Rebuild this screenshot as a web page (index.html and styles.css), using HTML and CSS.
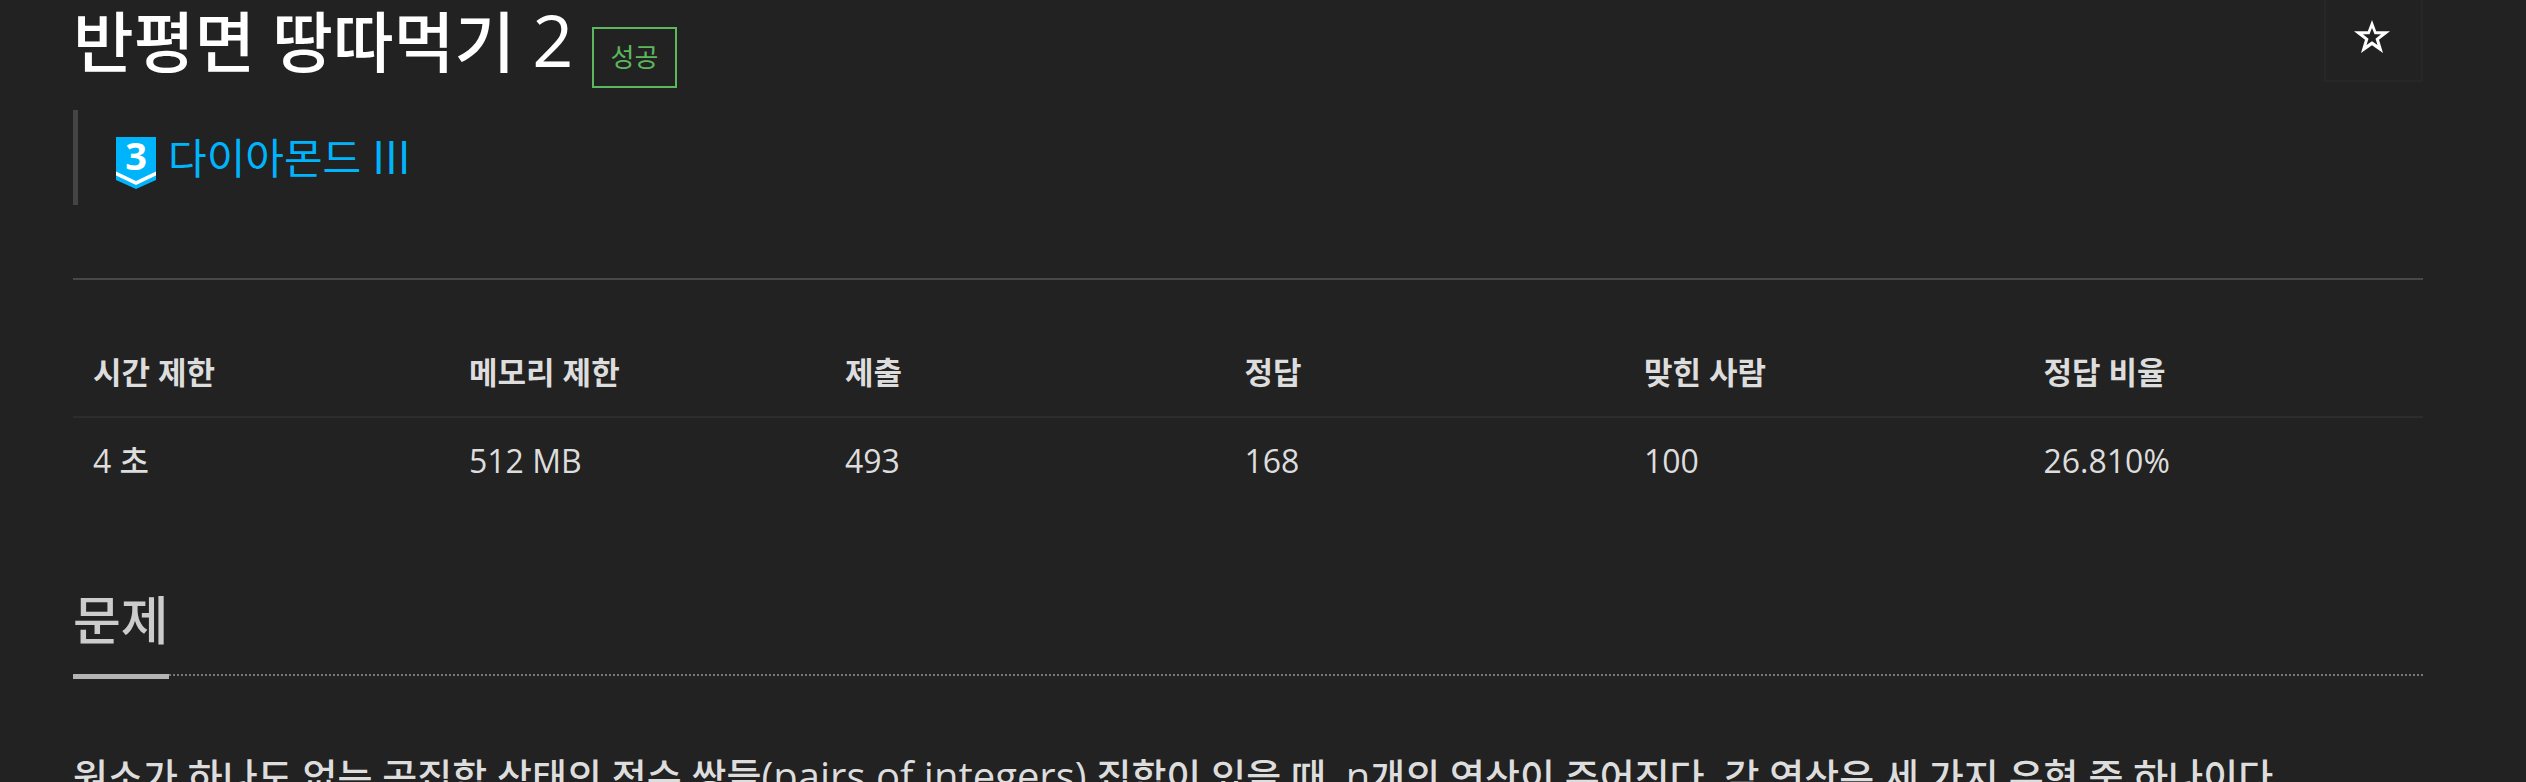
FILE: index.html
```html
<!DOCTYPE html>
<html lang="ko">
<head>
<meta charset="utf-8">
<title>반평면 땅따먹기 2</title>
<link rel="stylesheet" href="styles.css">
</head>
<body>
<main class="page">
  <header class="page-header">
    <h1 class="title">반평면 땅따먹기 <span class="title-number">2</span></h1>
    <span class="label-success">성공</span>
    <button class="favorite" type="button" aria-label="즐겨찾기">
      <svg class="star" viewBox="0 0 36 33" aria-hidden="true"><path fill="#fff" fill-rule="evenodd" d="M18 0L22.200 11.200H36L25 19.800L29 33L18 25.200L7 33L11 19.800L0 11.200H13.800L18 0ZM18 8L15.500 14.300H9L14.500 18.800L12.500 25L18 21.200L23.500 25L21.500 18.800L27 14.300H20.500Z"/></svg>
    </button>
  </header>
  <blockquote class="tier">
    <svg class="badge" viewBox="0 0 40 52" role="img" aria-label="3">
      <path fill="#00b4fc" d="M0 0H40V43L20 52L0 43Z"/>
      <path fill="#fff" d="M0 34.500L20 44L40 34.500V38.500L20 48L0 38.500Z"/>
      <text class="badge-number" x="20" y="33" text-anchor="middle">3</text>
    </svg>
    <a class="tier-name" href="#">다이아몬드 <span class="tier-level">III</span></a>
  </blockquote>
  <hr class="rule">
  <table class="info">
    <thead>
      <tr><th class="narrow">시간 제한</th><th class="narrow">메모리 제한</th><th>제출</th><th>정답</th><th>맞힌 사람</th><th>정답 비율</th></tr>
    </thead>
    <tbody>
      <tr><td>4 초</td><td>512 MB</td><td>493</td><td>168</td><td>100</td><td>26.810%</td></tr>
    </tbody>
  </table>
  <section>
    <div class="headline"><h2>문제</h2></div>
    <p class="description">원소가 하나도 없는 공집합 상태의 정수 쌍들<span class="latin">(pairs of integers)</span> 집합이 있을 때, <span class="latin">n</span>개의 연산이 주어진다. 각 연산은 세 가지 유형 중 하나이다.</p>
  </section>
</main>
</body>
</html>
```
FILE: styles.css
```css
* { box-sizing: border-box; }
html { overflow: hidden; }
body {
  margin: 0;
  background: #222;
  color: #ddd;
  font-family: "Open Sans", "Noto Sans CJK KR", sans-serif;
  font-size: 32px;
  line-height: 52px;
}
.page { padding: 0 103px 0 73px; }
.page-header { display: flex; align-items: flex-start; }
.title {
  margin: 0 18px 0 0;
  color: #fff;
  font-size: 66px;
  font-weight: 500;
  line-height: 82px;
}
.title-number { font-size: 72px; line-height: 1; }
.label-success {
  margin-top: 27px;
  padding: 0 17px;
  border: 2px solid #5cb85c;
  color: #5cb85c;
  font-size: 26px;
  line-height: 57px;
}
.favorite {
  display: flex;
  width: 99px;
  height: 82px;
  margin-left: auto;
  padding: 0 28px;
  border: 2px solid #272727;
  border-top: 0;
  background: #222;
}
.star { width: 36px; height: 33px; margin-top: 20px; }
.tier {
  display: flex;
  align-items: center;
  gap: 12px;
  height: 95px;
  margin: 22px 0 0;
  padding: 0 38px;
  border-left: 5px solid #444;
}
.badge { width: 40px; height: 52px; margin-top: 10px; }
.badge-number {
  fill: #fff;
  font-size: 38px;
  font-weight: 700;
}
.tier-name { color: #00b4fc; font-size: 42px; text-decoration: none; }
.tier-level { font-size: 46px; line-height: 1; }
.rule { height: 2px; margin: 73px 0 48px; border: 0; background: #484848; }
.info { width: 100%; border-collapse: collapse; table-layout: fixed; }
.info th, .info td { width: 17%; padding: 18px 20px; text-align: left; }
.info .narrow { width: 16%; }
.info th { border-bottom: 2px solid #2d2d2d; font-size: 31px; font-weight: 700; }
.info td { padding-top: 17px; font-weight: 500; }
.headline {
  display: flex;
  margin-top: 78px;
  border-bottom: 2px dotted #777;
}
.headline h2 {
  margin: 0 0 -5px;
  padding-bottom: 17px;
  border-bottom: 5px solid #b4b4b4;
  color: #ccc;
  font-size: 52px;
  font-weight: 500;
  line-height: 74px;
}
.description {
  margin: 70px 0 0;
  font-size: 38px;
  font-weight: 500;
  line-height: 60px;
  white-space: nowrap;
}
.latin { font-size: 40px; line-height: 1; }
```
